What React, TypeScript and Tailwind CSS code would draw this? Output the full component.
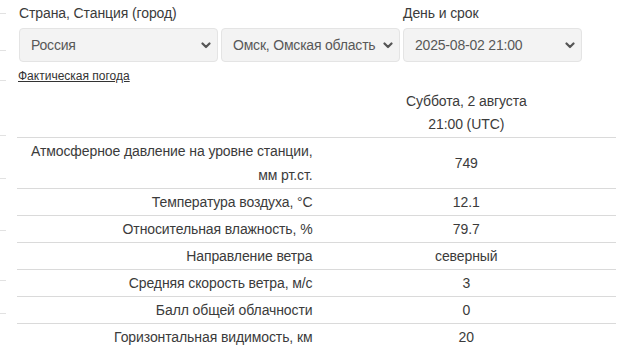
import React from 'react';

const rows: [string, string][] = [
    ["Атмосферное давление на уровне станции, мм рт.ст.", "749"],
    ["Температура воздуха, °C", "12.1"],
    ["Относительная влажность, %", "79.7"],
    ["Направление ветра", "северный"],
    ["Средняя скорость ветра, м/с", "3"],
    ["Балл общей облачности", "0"],
    ["Горизонтальная видимость, км", "20"],
];

const ticks = [13, 50, 80, 135, 178, 230, 280, 313];

const Chevron = () => (
    <svg className="shrink-0" width="10" height="7" viewBox="0 0 10 7" aria-hidden="true">
        <polyline points="1.5,1.5 5,5 8.5,1.5" fill="none" stroke="#555" strokeWidth="2.2" strokeLinecap="round" strokeLinejoin="round" />
    </svg>
);

const FakeSelect = ({ value }: { value: string }) => (
    <div className="h-[34px] flex items-center justify-between gap-1 pl-[11px] pr-[6px] bg-[#f3f3f3] border border-[#e4e4e4] rounded-[4px] text-[#585858]">
        <span className="whitespace-nowrap tracking-[-0.2px]">{value}</span>
        <Chevron />
    </div>
);

const App: React.FC = () => {
    return (
        <div className="relative w-[625px] h-[351px] overflow-hidden bg-white text-[14px] tracking-[-0.1px] text-[#3b3b3b] font-['Liberation_Sans',Arial,sans-serif]">
            {ticks.map((t) => (
                <div key={t} className="absolute left-0 w-[6px] h-px bg-[#e2e2e2]" style={{ top: t }} />
            ))}

            <div className="pl-[19px] pt-[3px]">
                <div className="grid grid-cols-[199px_179px_179px] gap-x-[3px]">
                    <div className="col-span-2 leading-[20px]">Страна, Станция (город)</div>
                    <div className="leading-[20px]">День и срок</div>
                    <div className="mt-[5px]"><FakeSelect value="Россия" /></div>
                    <div className="mt-[5px]"><FakeSelect value="Омск, Омская область" /></div>
                    <div className="mt-[5px]"><FakeSelect value="2025-08-02 21:00" /></div>
                </div>
            </div>

            <div className="pl-[18px] mt-[5px] leading-[16px]">
                <a href="#" className="text-[12px] tracking-normal text-[#333] underline">Фактическая погода</a>
            </div>

            <table className="ml-[17px] mt-[5px] w-[599px] border-collapse table-fixed">
                <thead>
                    <tr>
                        <th className="w-1/2"></th>
                        <th className="w-1/2 font-normal text-center leading-[23px] pt-[1px] pb-[1px]">
                            Суббота, 2 августа<br />21:00 (UTC)
                        </th>
                    </tr>
                </thead>
                <tbody>
                    {rows.map(([label, value]) => (
                        <tr key={label} className="border-t border-[#dadada]">
                            <td className="text-right leading-[24px] py-px pl-[8px] pr-[4px]">{label}</td>
                            <td className="text-center leading-[24px] py-px">{value}</td>
                        </tr>
                    ))}
                </tbody>
            </table>
        </div>
    );
};

export default App;
